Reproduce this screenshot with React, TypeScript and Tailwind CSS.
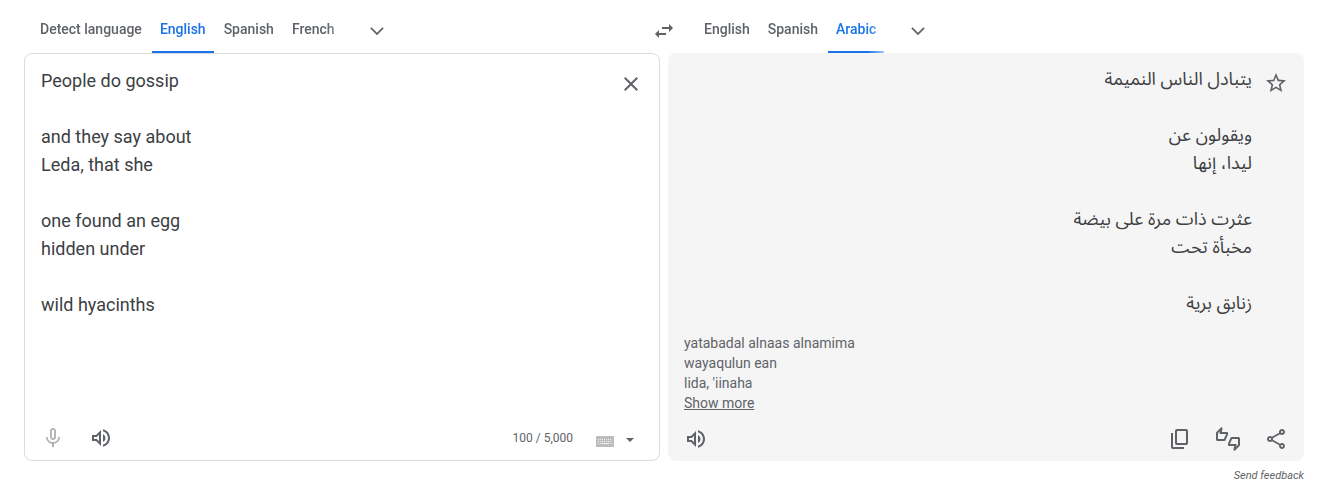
import { useState, type ReactNode } from 'react';
import {
  MdClose,
  MdMicNone,
  MdOutlineShare,
  MdOutlineThumbsUpDown,
  MdOutlineVolumeUp,
  MdStarBorder,
  MdSwapHoriz,
} from 'react-icons/md';

const SOURCE_TEXT = `People do gossip

and they say about
Leda, that she

one found an egg
hidden under

wild hyacinths`;

const TRANSLATION = `يتبادل الناس النميمة

ويقولون عن
ليدا، إنها

عثرت ذات مرة على بيضة
مخبأة تحت

زنابق برية`;

function IconButton({ label, children }: { label: string; children: ReactNode }) {
  return (
    <button
      type="button"
      aria-label={label}
      className="flex h-11 w-12 shrink-0 items-center justify-center text-[#5f6368]"
    >
      {children}
    </button>
  );
}

function ChevronIcon() {
  return (
    <svg viewBox="0 0 24 24" className="size-5" fill="currentColor" aria-hidden="true">
      <path d="M5.41 7.59L4 9l8 8 8-8-1.41-1.41L12 14.17z" />
    </svg>
  );
}

function CopyIcon() {
  return (
    <svg viewBox="0 -960 960 960" className="size-6" fill="currentColor" aria-hidden="true">
      <path d="M360-240q-33 0-56.5-23.5T280-320v-480q0-33 23.5-56.5T360-880h360q33 0 56.5 23.5T800-800v480q0 33-23.5 56.5T720-240H360Zm0-80h360v-480H360v480ZM200-80q-33 0-56.5-23.5T120-160v-560h80v560h440v80H200Z" />
    </svg>
  );
}

function KeyboardIcon() {
  return (
    <svg viewBox="0 0 18 11" className="h-[11px] w-[18px]" aria-hidden="true">
      <rect width="18" height="11" rx="0.6" fill="#bdbdbd" />
      <path d="M2 3.5h14M2 5.5h14" stroke="#f1f1f1" strokeWidth="1" strokeDasharray="1 1" />
      <path d="M2 7.5h1M4.500 7.500h9M15 7.500h1" stroke="#f1f1f1" strokeWidth="1" />
    </svg>
  );
}

function LanguageTabs({ label, languages, initial }: { label: string; languages: string[]; initial: string }) {
  const [selected, setSelected] = useState(initial);
  return (
    <div className="flex min-w-0 flex-1 items-center gap-2.5 pl-2">
      <div
        role="tablist"
        aria-label={label}
        className="flex min-w-0 gap-0.5 overflow-hidden [mask-image:linear-gradient(to_left,rgba(0,0,0,0.4),black_16px)]"
      >
        {languages.map((language) => (
          <button
            key={language}
            type="button"
            role="tab"
            aria-selected={language === selected}
            onClick={() => setSelected(language)}
            className={
              language === selected
                ? 'h-[53px] border-b-2 border-[#1a73e8] px-2 pt-1.5 text-sm font-medium whitespace-nowrap text-[#1a73e8]'
                : 'h-[53px] border-b-2 border-transparent px-2 pt-1.5 text-sm font-medium whitespace-nowrap text-[#5f6368]'
            }
          >
            {language}
          </button>
        ))}
      </div>
      <div className="pt-2">
        <IconButton label="More languages">
          <ChevronIcon />
        </IconButton>
      </div>
    </div>
  );
}

export default function App() {
  const [source, setSource] = useState(SOURCE_TEXT);
  return (
    <main className="bg-white pr-[38px] pl-6 font-['Roboto','Noto_Sans',sans-serif] text-[#3c4043]">
      <header className="flex h-[53px]">
        <LanguageTabs
          label="Source language"
          languages={['Detect language', 'English', 'Spanish', 'French']}
          initial="English"
        />
        <div className="pt-[9px]">
          <IconButton label="Swap languages">
            <MdSwapHoriz className="size-6" />
          </IconButton>
        </div>
        <LanguageTabs
          label="Target language"
          languages={['English', 'Spanish', 'Arabic']}
          initial="Arabic"
        />
      </header>

      <div className="grid grid-cols-2 gap-2">
        <section
          aria-label="Source text"
          className="flex flex-col justify-between rounded-lg border border-[#dadce0]"
        >
          <div className="flex items-start pt-2 pl-4">
            <textarea
              aria-label="Source text"
              rows={9}
              value={source}
              spellCheck={false}
              onChange={(event) => setSource(event.target.value)}
              className="mt-[5px] min-w-0 flex-1 resize-none overflow-hidden text-lg leading-7 outline-none"
            />
            <div className="pr-1">
              <IconButton label="Clear source text">
                <MdClose className="size-6" />
              </IconButton>
            </div>
          </div>
          <div className="flex items-center px-1">
            <div className="opacity-50">
              <IconButton label="Translate by voice">
                <MdMicNone className="size-6" />
              </IconButton>
            </div>
            <IconButton label="Listen to source text">
              <MdOutlineVolumeUp className="size-6" />
            </IconButton>
            <span className="ml-auto text-xs text-[#5f6368]">100 / 5,000</span>
            <button
              type="button"
              aria-label="Input tool"
              className="ml-[23px] flex items-center gap-3 pt-1.5 pr-[21px]"
            >
              <KeyboardIcon />
              <svg viewBox="0 0 8 4" className="mb-0.5 h-1 w-2" fill="#5f6368" aria-hidden="true">
                <path d="M0 0h8L4 4z" />
              </svg>
            </button>
          </div>
        </section>

        <section aria-label="Translation" className="flex flex-col rounded-lg bg-[#f5f5f5]">
          <div className="flex items-start pt-2 pr-1 pl-4">
            <p
              dir="rtl"
              lang="ar"
              className="mt-1 min-w-0 flex-1 font-['Noto_Sans_Arabic','Noto_Sans_Arabic_UI','DejaVu_Sans',sans-serif] text-lg leading-7 whitespace-pre-line"
            >
              {TRANSLATION}
            </p>
            <IconButton label="Save translation">
              <MdStarBorder className="size-6" />
            </IconButton>
          </div>
          <div className="px-4 pt-4 text-sm leading-5 text-[#5f6368]">
            <p>
              yatabadal alnaas alnamima
              <br />
              wayaqulun ean
              <br />
              lida, 'iinaha
            </p>
            <button type="button" className="block underline">
              Show more
            </button>
          </div>
          <div className="flex items-center px-1 pt-1">
            <IconButton label="Listen to translation">
              <MdOutlineVolumeUp className="size-6" />
            </IconButton>
            <div className="ml-auto flex">
              <IconButton label="Copy translation">
                <CopyIcon />
              </IconButton>
              <IconButton label="Rate translation">
                <MdOutlineThumbsUpDown className="size-6" />
              </IconButton>
              <IconButton label="Share translation">
                <MdOutlineShare className="size-6" />
              </IconButton>
            </div>
          </div>
        </section>
      </div>

      <footer className="flex justify-end pt-2">
        <a href="#feedback" className="text-[11px] leading-[14px] text-[#5f6368] italic">
          Send feedback
        </a>
      </footer>
    </main>
  );
}
